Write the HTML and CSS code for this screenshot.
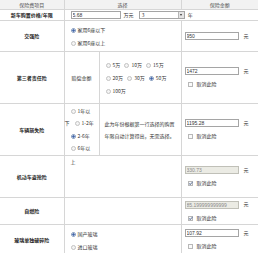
FILE: index.html
```html
<!DOCTYPE html>
<html lang="zh">
<head>
    <meta charset="UTF-8">
    <title>保险计算器</title>
    <link rel="stylesheet" href="styles.css">
</head>
<body>
    <table class="calc">
        <colgroup>
            <col class="c-name">
            <col class="c-sub">
            <col class="c-opt">
            <col class="c-sum">
        </colgroup>
        <tr class="head">
            <th>保险费项目</th>
            <th colspan="2">选择</th>
            <th>保险金额</th>
        </tr>
        <tr class="r-price">
            <td class="name">新车购置价格/年限</td>
            <td colspan="3" class="price">
                <input type="text" class="txt wide" value="5.68"><span class="unit">万元</span>
                <span class="sel">3<span class="arrow"></span></span><span class="unit">年</span>
            </td>
        </tr>
        <tr class="r-jq">
            <td class="name">交强险</td>
            <td colspan="2" class="opts">
                <div class="line"><input type="radio" name="jq" checked>家用6座以下</div>
                <div class="line"><input type="radio" name="jq">家用6座以上</div>
            </td>
            <td class="sum">
                <div><input type="text" class="txt" value="950"><span class="yuan">元</span></div>
            </td>
        </tr>
        <tr class="r-third">
            <td class="name">第三者责任险</td>
            <td class="sub">赔偿金额</td>
            <td class="opts">
                <div class="line">
                    <input type="radio" name="sz">5万
                    <input type="radio" name="sz">10万
                    <input type="radio" name="sz">15万
                </div>
                <div class="line">
                    <input type="radio" name="sz">20万
                    <input type="radio" name="sz">30万
                    <input type="radio" name="sz" checked>50万
                </div>
                <div class="line"><input type="radio" name="sz">100万</div>
            </td>
            <td class="sum">
                <div><input type="text" class="txt" value="1472"><span class="yuan">元</span></div>
                <div class="cancel"><input type="checkbox">取消此险</div>
            </td>
        </tr>
        <tr class="r-car">
            <td class="name">车辆损失险</td>
            <td class="opts years">
                <div class="line"><input type="radio" name="yr">1年以</div>
                <div class="line"><span class="hang">下</span><input type="radio" name="yr">1-2年</div>
                <div class="line"><input type="radio" name="yr" checked>2-6年</div>
                <div class="line"><input type="radio" name="yr">6年以</div>
            </td>
            <td class="note">此为年份根据第一行选择的购置年限自动计算得出，无需选择。</td>
            <td class="sum">
                <div><input type="text" class="txt" value="1195.28"><span class="yuan">元</span></div>
                <div class="cancel"><input type="checkbox">取消此险</div>
            </td>
        </tr>
        <tr class="r-theft">
            <td class="name">机动车盗抢险</td>
            <td colspan="2" class="top">上</td>
            <td class="sum">
                <div><input type="text" class="txt" value="330.73" disabled><span class="yuan">元</span></div>
                <div class="cancel"><input type="checkbox" checked disabled>取消此险</div>
            </td>
        </tr>
        <tr class="r-fire">
            <td class="name">自燃险</td>
            <td colspan="2"></td>
            <td class="sum">
                <div><input type="text" class="txt" value="85.199999999999" disabled><span class="yuan">元</span></div>
                <div class="cancel"><input type="checkbox" checked disabled>取消此险</div>
            </td>
        </tr>
        <tr class="r-glass">
            <td class="name">玻璃单独破碎险</td>
            <td colspan="2" class="opts">
                <div class="line"><input type="radio" name="gl" checked>国产玻璃</div>
                <div class="line"><input type="radio" name="gl">进口玻璃</div>
            </td>
            <td class="sum">
                <div><input type="text" class="txt" value="107.92"><span class="yuan">元</span></div>
                <div class="cancel"><input type="checkbox">取消此险</div>
            </td>
        </tr>
    </table>
</body>
</html>
```

FILE: styles.css
```css
body {
    margin: 0;
    background: #ffffff;
    font-family: "Noto Sans CJK SC", "Liberation Sans", sans-serif;
    font-size: 5px;
    color: #333333;
}
.calc {
    width: 258px;
    border-collapse: collapse;
    table-layout: fixed;
    border-bottom: 1px solid #7f8a99;
}
.c-name { width: 64px; }
.c-sub { width: 35px; }
.c-opt { width: 82px; }
.c-sum { width: 77px; }
th, td {
    border: 1px solid #d6d6d6;
    padding: 0;
    font-weight: normal;
    line-height: 8px;
}
tr:first-child th { border-top: none; }
th:first-child, td:first-child { border-left: none; }
th:last-child, td:last-child { border-right: none; }
.head th {
    height: 9px;
    background: #f2f2f2;
    color: #555555;
    text-align: center;
}
.name {
    text-align: center;
    font-weight: bold;
    color: #222222;
}
.r-price { height: 11px; }
.r-jq { height: 31px; }
.r-third { height: 52px; }
.r-car { height: 52px; }
.r-theft { height: 42px; }
.r-fire { height: 27px; }
.r-glass { height: 30px; }

.price {
    padding-left: 6px;
}
.price .txt.wide { width: 50px; }
.unit { margin: 0 4px 0 3px; }
.sel {
    display: inline-block;
    vertical-align: middle;
    box-sizing: border-box;
    width: 46px;
    height: 8px;
    border: 1px solid #a5a5a5;
    padding-left: 2px;
    line-height: 6px;
    position: relative;
}
.sel .arrow {
    position: absolute;
    right: 0;
    top: 0;
    width: 5px;
    height: 6px;
    background: #e4e4e4;
    border-left: 1px solid #b5b5b5;
}
.sel .arrow::after {
    content: "";
    position: absolute;
    left: 1px;
    top: 2px;
    border-left: 1.5px solid transparent;
    border-right: 1.5px solid transparent;
    border-top: 2px solid #333333;
}

.txt {
    box-sizing: border-box;
    width: 54px;
    height: 8px;
    margin: 0;
    padding: 0 1px;
    border: 1px solid #a5a5a5;
    font-family: "Liberation Sans", sans-serif;
    font-size: 5px;
    color: #333333;
    vertical-align: middle;
    background: #ffffff;
}
.txt:disabled {
    background: #ebebe4;
    color: #8a8a8a;
    border-color: #c0c0b8;
}
.opts { padding-left: 6px; }
.opts .line { line-height: 13px; white-space: nowrap; }
.years .line { line-height: 12.5px; }
.sub { text-align: center; }
.note {
    padding: 0 4px 0 5px;
    line-height: 12px;
}
.top {
    vertical-align: top;
    padding: 2px 0 0 6px;
    line-height: 8px;
}
.hang { margin-left: -6px; margin-right: 2px; }

input[type="radio"] {
    appearance: none;
    width: 5px;
    height: 5px;
    margin: 0 2px 0 3px;
    border: 1px solid #c2c2c2;
    border-radius: 50%;
    background: #f4f4f4;
    vertical-align: middle;
    box-sizing: border-box;
}
.opts .line input[type="radio"]:first-child { margin-left: 0; }
input[type="radio"]:checked {
    border-color: #8aa0c0;
    background: radial-gradient(circle, #3f63a8 45%, #dfe6f2 55%);
}
.sum {
    padding-left: 3px;
    vertical-align: middle;
}
.yuan { margin-left: 5px; }
.cancel {
    margin-top: 5px;
    padding-left: 3px;
    line-height: 8px;
}
input[type="checkbox"] {
    appearance: none;
    position: relative;
    width: 5px;
    height: 5px;
    margin: 0 4px 0 0;
    border: 1px solid #b8b8b8;
    background: #fafafa;
    vertical-align: middle;
    box-sizing: border-box;
}
input[type="checkbox"]:checked::after {
    content: "";
    position: absolute;
    left: 1px;
    top: -1px;
    width: 1px;
    height: 3px;
    border: solid #7a8aa8;
    border-width: 0 1px 1px 0;
    transform: rotate(45deg);
}
```
